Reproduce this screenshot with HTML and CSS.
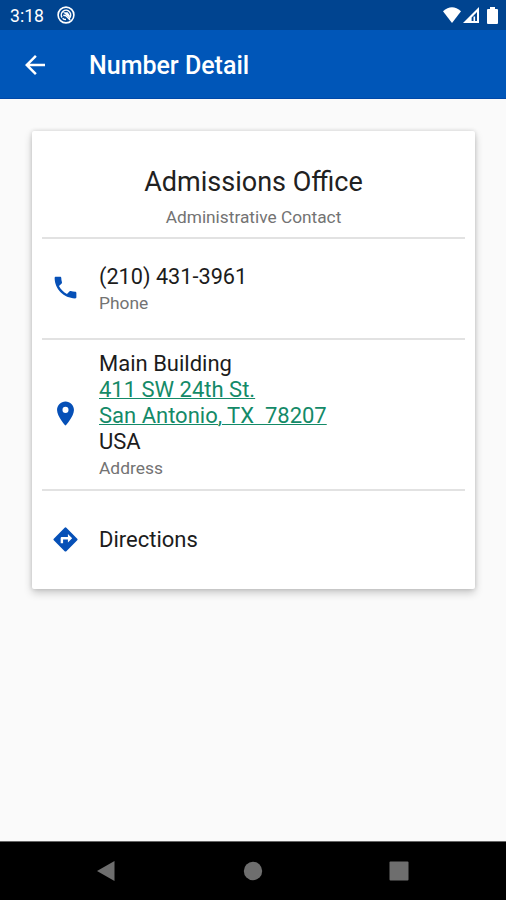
FILE: index.html
```
<!DOCTYPE html>
<html lang="en">
<head>
  <meta charset="UTF-8">
  <meta name="viewport" content="width=device-width, initial-scale=1.0">
  <title>Number Detail</title>
  <link rel="stylesheet" href="styles.css">
</head>
<body>
  <div class="screen">
    <div class="statusBar">
      <span class="time">3:18</span>
      <svg class="notif" viewBox="0 0 18 18">
        <circle cx="9" cy="9" r="7.9" fill="none" stroke="#fff" stroke-width="1.6"/>
        <path d="M5 11.5A4.7 4.7 0 1 1 12 12.6M5.6 12.2Q7 13.6 9 13.6" fill="none" stroke="#fff" stroke-width="1.5"/>
        <path d="M6 6.2h4.6l2.2 3v3.2L9.6 9.6z" fill="#fff"/>
        <path d="M6.3 9.3l2.6.4 4.2 4.2" fill="none" stroke="#fff" stroke-width="1.4"/>
      </svg>
      <svg class="wifi" viewBox="0 0 18 16"><path d="M0 4.2Q9-3.6 18 4.2L9 16z"/></svg>
      <svg class="signal" viewBox="0 0 16 16"><path fill-rule="evenodd" d="M16 0v16H0zM14 5L8.6 10.6V14H14z"/><path d="M10.5 9.5h1.6V14h-1.6z"/></svg>
      <svg class="battery" viewBox="0 0 11 17"><path d="M3 0h5v2h2q1 0 1 1v13q0 1-1 1H1q-1 0-1-1V3q0-1 1-1h2z"/></svg>
    </div>
    <header class="appBar">
      <svg class="back" viewBox="0 0 24 24"><path d="M20 11H7.83l5.59-5.59L12 4l-8 8 8 8 1.41-1.41L7.83 13H20v-2z"/></svg>
      <h1 class="title">Number Detail</h1>
    </header>

    <main class="content">
      <div class="card">
        <div class="cardHeader">
          <h2 class="name">Admissions Office</h2>
          <p class="role">Administrative Contact</p>
        </div>
        <div class="row phone">
          <svg class="icon" viewBox="0 0 24 24"><path d="M6.62 10.79c1.44 2.83 3.76 5.14 6.59 6.59l2.2-2.2c.27-.27.67-.36 1.02-.24 1.12.37 2.33.57 3.57.57.55 0 1 .45 1 1V20c0 .55-.45 1-1 1-9.39 0-17-7.61-17-17 0-.55.45-1 1-1h3.5c.55 0 1 .45 1 1 0 1.25.2 2.45.57 3.57.11.35.03.74-.25 1.02l-2.2 2.2z"/></svg>
          <div class="text">
            <div class="value number">(210) 431-3961</div>
            <div class="label">Phone</div>
          </div>
        </div>
        <div class="row address">
          <svg class="icon" viewBox="0 0 24 24"><path d="M12 2C8.13 2 5 5.13 5 9c0 5.25 7 13 7 13s7-7.75 7-13c0-3.87-3.13-7-7-7zm0 9.5a2.5 2.5 0 0 1 0-5 2.5 2.5 0 0 1 0 5z"/></svg>
          <div class="text">
            <div class="value">Main Building</div>
            <div class="value link">411 SW 24th St.</div>
            <div class="value link">San Antonio, TX&nbsp; 78207</div>
            <div class="value">USA</div>
            <div class="label">Address</div>
          </div>
        </div>
        <div class="row directions">
          <svg class="icon" viewBox="0 0 24 24"><path d="M21.71 11.29l-9-9a.996.996 0 0 0-1.41 0l-9 9a.996.996 0 0 0 0 1.41l9 9c.39.39 1.02.39 1.41 0l9-9a.996.996 0 0 0 0-1.41zM14 14.5V12h-4v3H8v-4c0-.55.45-1 1-1h5V7.5l3.5 3.5-3.5 3.5z"/></svg>
          <div class="text">
            <div class="value">Directions</div>
          </div>
        </div>
      </div>
    </main>

    <nav class="navBar">
      <svg viewBox="0 0 20 20"><path d="M1 10L18.5 0v20z"/></svg>
      <svg viewBox="0 0 20 20"><circle cx="10" cy="10" r="9.2"/></svg>
      <svg viewBox="0 0 20 20"><rect x=".5" y=".5" width="19" height="19" rx="1"/></svg>
    </nav>
  </div>
</body>
</html>
```
FILE: styles.css
```
*{box-sizing: border-box; margin: 0; padding: 0;}
body{font-family: Roboto, "Liberation Sans", sans-serif; background: #fafafa;}
svg{display: block; flex: none;}

.screen{display: flex; flex-direction: column; height: 900px; overflow: hidden;}

.statusBar{display: flex; align-items: center; height: 30px; padding: 0 8px 0 10px; background: #004490; color: #fff; fill: #fff;}
.time{width: 47px; font-size: 17.6px; line-height: 30px; padding-top: 2px;}
.notif{width: 18px; height: 18px;}
.wifi{width: 18px; height: 16px; margin-left: auto;}
.signal{width: 16px; height: 16px; margin: 0 8px 0 2px;}
.battery{width: 11px; height: 17px;}

.appBar{display: flex; align-items: center; height: 69px; padding: 1px 20px 0; background: #0056b8; border-bottom: 1px solid #0048a8; color: #fff;}
.back{width: 30px; height: 30px; fill: #fff;}
.title{margin-left: 39px; padding-top: 2px; font-size: 25px; font-weight: 500; line-height: 30px;}

.content{flex: 1; padding: 32px 31px 0 32px;}
.card{height: 458px; padding: 0 10px; background: #fff; border-radius: 2px; box-shadow: 0 4px 9px rgba(0,0,0,0.2), 0 0 4px rgba(0,0,0,0.14);}
.cardHeader{height: 108px; padding-top: 34px; text-align: center; border-bottom: 2px solid #e2e2e2;}
.name{font-size: 27px; font-weight: 400; line-height: 34px; color: #212121;}
.role{margin-top: 7px; font-size: 17.3px; line-height: 22px; color: #737373;}

.row{display: flex; align-items: center; padding-left: 9px; border-bottom: 2px solid #e2e2e2;}
.row:last-child{border-bottom: 0;}
.icon{width: 29px; height: 29px; margin-right: 19px; fill: #0650b7;}
.phone{height: 101px;}
.phone .icon, .address .icon{margin-bottom: 3px;}
.phone .text, .address .text{padding-top: 2px;}
.address{height: 151px;}
.directions{height: 98px;}
.directions .icon{margin-bottom: 1px;}
.value{font-size: 22px; line-height: 26px; color: #1c1c1c;}
.number{font-size: 21.7px;}
.link{color: #148a68; text-decoration: underline; text-decoration-thickness: 1px;}
.label{font-size: 17.4px; line-height: 26px; color: #737373;}

.navBar{display: flex; justify-content: space-between; align-items: center; height: 59px; padding: 0 97px 0 96px; background: #000; border-top: 1px solid #666; fill: #6e6e6e;}
.navBar svg{width: 20px; height: 20px;}
```
